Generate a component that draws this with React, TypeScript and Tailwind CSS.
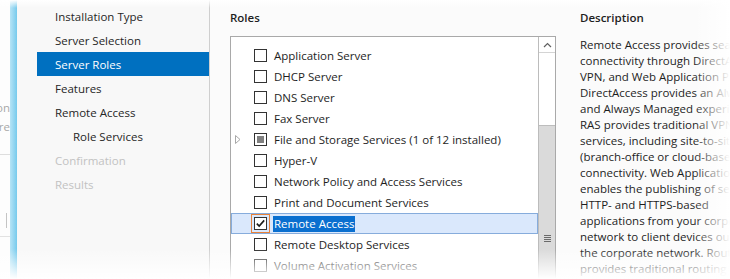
import React from "react";

const navItems: { label: string; state: "normal" | "selected" | "disabled"; indent?: boolean }[] = [
  { label: "Installation Type", state: "normal" },
  { label: "Server Selection", state: "normal" },
  { label: "Server Roles", state: "selected" },
  { label: "Features", state: "normal" },
  { label: "Remote Access", state: "normal" },
  { label: "Role Services", state: "normal", indent: true },
  { label: "Confirmation", state: "disabled" },
  { label: "Results", state: "disabled" },
];

type Role = { label: string; kind?: "partial" | "checked"; expandable?: boolean; selected?: boolean };

const roles: Role[] = [
  { label: "Application Server" },
  { label: "DHCP Server" },
  { label: "DNS Server" },
  { label: "Fax Server" },
  { label: "File and Storage Services (1 of 12 installed)", kind: "partial", expandable: true },
  { label: "Hyper-V" },
  { label: "Network Policy and Access Services" },
  { label: "Print and Document Services" },
  { label: "Remote Access", kind: "checked", selected: true },
  { label: "Remote Desktop Services" },
  { label: "Volume Activation Services" },
  { label: "Web Server (IIS)" },
];

const description = [
  "Remote Access provides seamless",
  "connectivity through DirectAccess,",
  "VPN, and Web Application Proxy.",
  "DirectAccess provides an Always On",
  "and Always Managed experience.",
  "RAS provides traditional VPN",
  "services, including site-to-site",
  "(branch-office or cloud-based)",
  "connectivity. Web Application Proxy",
  "enables the publishing of selected",
  "HTTP- and HTTPS-based",
  "applications from your corporate",
  "network to client devices outside of",
  "the corporate network. Routing",
  "provides traditional routing",
  "capabilities, including NAT and other",
];

function Checkbox({ kind, focused }: { kind?: "partial" | "checked"; focused?: boolean }) {
  return (
    <span className="relative flex h-[13px] w-[13px] shrink-0 items-center justify-center border border-[#333333] bg-white">
      {kind === "partial" && <span className="h-[7px] w-[7px] bg-[#808080]" />}
      {kind === "checked" && (
        <svg width="11" height="11" viewBox="0 0 11 11" className="block">
          <path d="M1.8 5.6 L4.2 8.1 L9.2 2.4" fill="none" stroke="#1a1a1a" strokeWidth="1.6" />
        </svg>
      )}
      {focused && <span className="absolute -inset-[4px] border border-[#e8823a]" />}
    </span>
  );
}

function RoleRow({ role }: { role: Role }) {
  return (
    <div
      className={
        "flex h-[21px] items-center whitespace-nowrap " +
        (role.selected ? "bg-[#dae8fc] shadow-[inset_0_0_0_1px_#86acdc]" : "")
      }
    >
      <span className="flex w-[23px] shrink-0 items-center pl-[4px]">
        {role.expandable && (
          <svg width="6" height="9" viewBox="0 0 6 9" className="block">
            <path d="M0.5 0.5 L5 4.5 L0.5 8.5 Z" fill="none" stroke="#a8a8a8" strokeWidth="1" />
          </svg>
        )}
      </span>
      <Checkbox kind={role.kind} focused={role.selected} />
      {role.selected ? (
        <span className="ml-[6px] bg-[#0a6fcf] px-[1px] leading-4 text-white">{role.label}</span>
      ) : (
        <span className="ml-[7px] text-[#1e1e1e]">{role.label}</span>
      )}
    </div>
  );
}

export default function App() {
  return (
    <div className="relative flex h-[279px] w-[730px] overflow-hidden bg-[#fbfbfb] font-['Open_Sans',sans-serif] text-[11.5px] leading-4 text-[#1e1e1e]">
      {/* fragment of the window behind */}
      <div className="flex w-[10px] shrink-0 flex-col items-end overflow-hidden bg-[#fdfdfd] text-[#a8a8a8]">
        <div className="mt-[100px] h-4 whitespace-nowrap">Configuration</div>
        <div className="mt-[3px] h-4 whitespace-nowrap">Before</div>
        <div className="mt-[19px] h-px w-full bg-[#dedede]" />
        <div className="mt-[58px] mr-[3px] h-[15px] w-px bg-[#c4c4c4]" />
        <div className="mt-[8px] h-px w-full bg-[#e2e2e2]" />
      </div>

      {/* blue accent stripe */}
      <div className="w-[7px] shrink-0 bg-gradient-to-r from-[#b6e4f6] to-[#76caec]" />

      {/* navigation */}
      <nav className="w-[193px] shrink-0 border-r border-[#cfcfcf] bg-[#f8f8f8] pt-[4px] pl-[20px]">
        {navItems.map((item) => (
          <div
            key={item.label}
            className={
              "flex h-6 items-center whitespace-nowrap pt-[2px] " +
              (item.indent ? "pl-[36px] " : "pl-[18px] ") +
              (item.state === "selected"
                ? "bg-[#0070c0] text-white"
                : item.state === "disabled"
                ? "text-[#c2c2c2]"
                : "text-[#262626]")
            }
          >
            {item.label}
          </div>
        ))}
      </nav>

      {/* content */}
      <main className="flex flex-1 pt-[10px] pl-[20px]">
        <section className="w-[326px] shrink-0">
          <h2 className="h-4 font-semibold text-[#1e1e1e]">Roles</h2>
          <div className="mt-[10px] flex h-[270px] border border-[#a9a9a9] bg-white">
            <div className="flex-1 overflow-hidden pt-[8px]">
              {roles.map((r) => (
                <RoleRow key={r.label} role={r} />
              ))}
            </div>
            <div className="flex w-[17px] shrink-0 flex-col border-l border-[#bcbcbc] bg-white">
              <div className="flex h-[16px] items-center justify-center border-b border-[#d4d4d4]">
                <svg width="9" height="6" viewBox="0 0 9 6" className="block">
                  <path d="M1 5 L4.5 1.5 L8 5" fill="none" stroke="#606060" strokeWidth="1.2" />
                </svg>
              </div>
              <div className="h-[72px]" />
              <div className="flex flex-1 flex-col items-center border-t border-[#bdbdbd] bg-[#dadada] pt-[109px]">
                <div className="flex w-[7px] flex-col gap-[1px]">
                  <div className="h-px bg-[#6a6a6a]" />
                  <div className="h-px bg-[#6a6a6a]" />
                  <div className="h-px bg-[#6a6a6a]" />
                  <div className="h-px bg-[#6a6a6a]" />
                </div>
              </div>
            </div>
          </div>
        </section>

        <section className="ml-[24px] shrink-0">
          <h2 className="h-4 font-semibold text-[#1e1e1e]">Description</h2>
          <div className="mt-[11px] text-[#1e1e1e]">
            {description.map((line) => (
              <div key={line} className="h-4 whitespace-nowrap">
                {line}
              </div>
            ))}
          </div>
        </section>
      </main>

      {/* soft screenshot edges */}
      <div className="pointer-events-none absolute inset-x-0 top-0 h-[8px] bg-gradient-to-b from-white to-transparent" />
      <div className="pointer-events-none absolute inset-y-0 right-0 w-[36px] bg-gradient-to-r from-transparent to-white" />
      <div className="pointer-events-none absolute inset-x-0 bottom-0 h-[30px] bg-gradient-to-b from-transparent to-white" />
    </div>
  );
}
